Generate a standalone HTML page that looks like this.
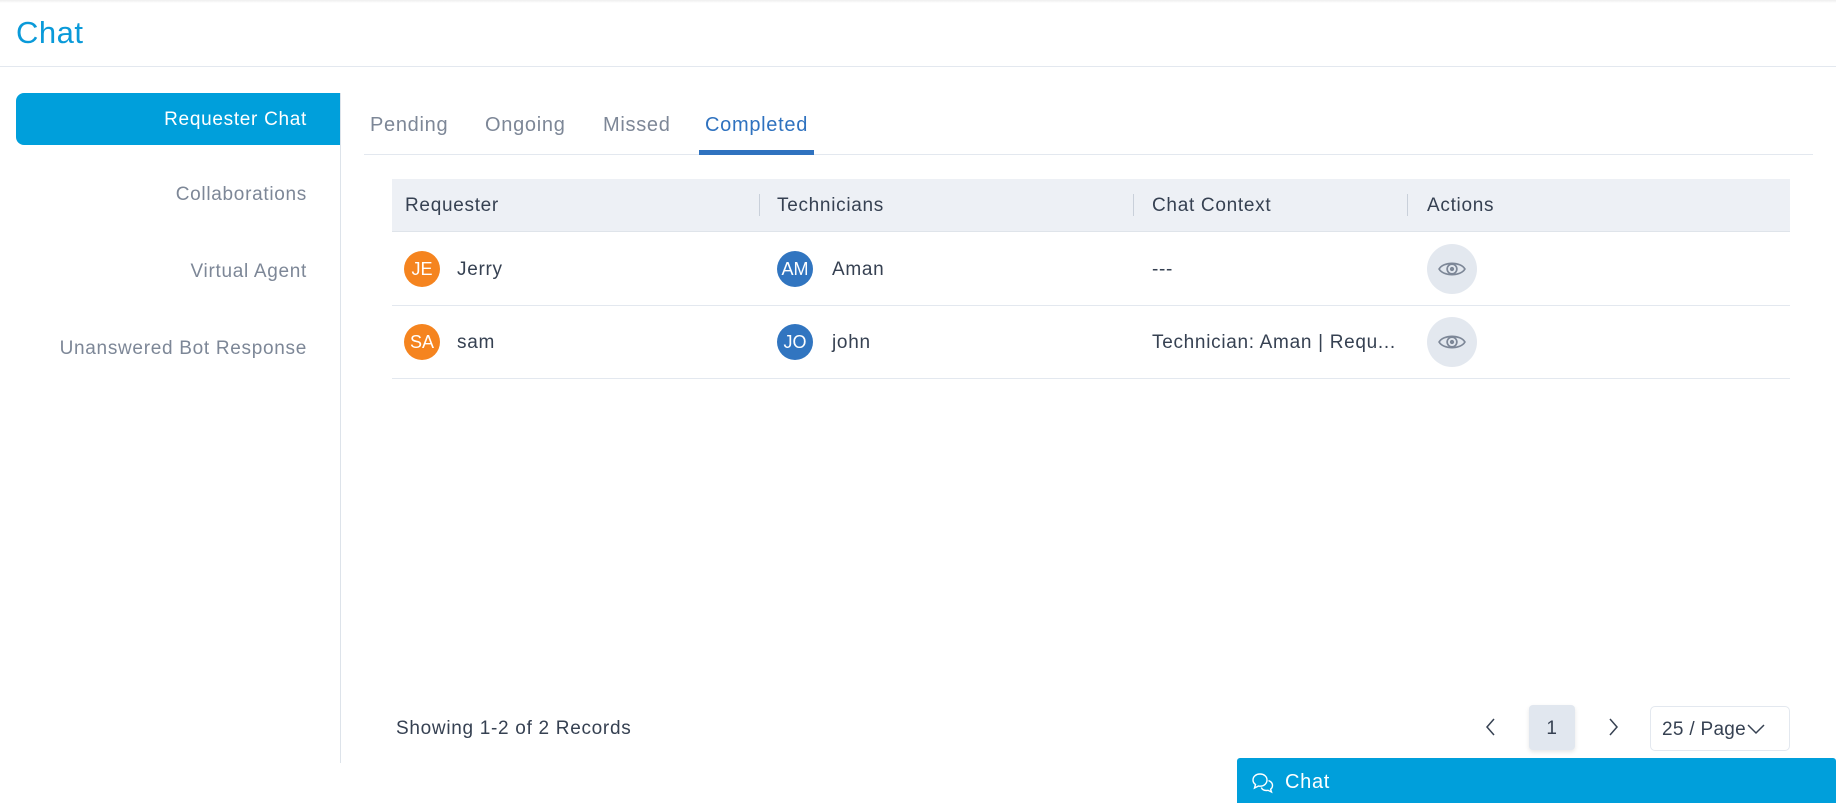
<!DOCTYPE html>
<html><head><meta charset="utf-8"><style>
*{box-sizing:border-box;margin:0;padding:0}
body{width:1836px;height:803px;overflow:hidden;background:#fff;font-family:"Liberation Sans",sans-serif;position:relative;color:#364152;letter-spacing:0.7px}
.abs{position:absolute}
.title{left:16px;top:15px;font-size:31px;color:#0a9ad9;letter-spacing:0.5px}
.hline{left:0;top:66px;width:1836px;height:1px;background:#e3e8ef}
.topsh{left:0;top:0;width:1836px;height:3px;background:linear-gradient(#eee,#fff)}
.active{left:16px;top:93px;width:324px;height:52px;background:#009fdb;border-radius:8px 0 0 8px;color:#fff;font-size:19px;text-align:right;padding-right:33px;line-height:54px}
.side{left:0;width:307px;text-align:right;font-size:19px;color:#7d8797}
.vline{left:340px;top:93px;width:1px;height:670px;background:#dde3ea}
.tab{top:114px;font-size:20px;color:#7d8797}
.tabline{left:364px;top:154px;width:1449px;height:1px;background:#e3e8ef}
.th{top:179px;left:392px;width:1398px;height:53px;background:#edf0f5;border-bottom:1px solid #dfe4ea}
.thc{top:195px;font-size:19px;color:#364152}
.sep{top:194px;width:1px;height:22px;background:#c9d0da}
.row{left:392px;width:1398px;height:1px;background:#e3e8ef}
.av{width:36px;height:36px;border-radius:50%;color:#fff;font-size:18px;text-align:center;line-height:37px;letter-spacing:0}
.or{background:#f5841f}.bl{background:#3175c0}
.cell{font-size:19px;color:#364152}
.eye{width:50px;height:50px;border-radius:50%;background:#e3e8ef;display:flex;align-items:center;justify-content:center}
</style></head><body>
<div class="abs topsh"></div>
<div class="abs title">Chat</div>
<div class="abs hline"></div>
<div class="abs active">Requester Chat</div>
<div class="abs side" style="top:184px">Collaborations</div>
<div class="abs side" style="top:261px">Virtual Agent</div>
<div class="abs side" style="top:338px">Unanswered Bot Response</div>
<div class="abs vline"></div>

<div class="abs tab" style="left:370px">Pending</div>
<div class="abs tab" style="left:485px">Ongoing</div>
<div class="abs tab" style="left:603px">Missed</div>
<div class="abs tab" style="left:705px;color:#2f72bf">Completed</div>
<div class="abs tabline"></div>
<div class="abs" style="left:699px;top:150px;width:115px;height:5px;background:#2f72bf"></div>

<div class="abs th"></div>
<div class="abs thc" style="left:405px">Requester</div>
<div class="abs sep" style="left:759px"></div>
<div class="abs thc" style="left:777px">Technicians</div>
<div class="abs sep" style="left:1133px"></div>
<div class="abs thc" style="left:1152px">Chat Context</div>
<div class="abs sep" style="left:1407px"></div>
<div class="abs thc" style="left:1427px">Actions</div>

<div class="abs av or" style="left:404px;top:251px">JE</div>
<div class="abs cell" style="left:457px;top:259px">Jerry</div>
<div class="abs av bl" style="left:777px;top:251px">AM</div>
<div class="abs cell" style="left:832px;top:259px">Aman</div>
<div class="abs cell" style="left:1152px;top:259px">---</div>
<div class="abs eye" style="left:1427px;top:244px"><svg width="28" height="20" viewBox="0 0 26 18"><path d="M1 9C5 2 21 2 25 9C21 16 5 16 1 9Z" fill="none" stroke="#7d8797" stroke-width="1.6"/><circle cx="13" cy="9" r="4.5" fill="none" stroke="#7d8797" stroke-width="1.6"/><circle cx="13" cy="9" r="2" fill="#7d8797"/></svg></div>
<div class="abs row" style="top:305px"></div>

<div class="abs av or" style="left:404px;top:324px">SA</div>
<div class="abs cell" style="left:457px;top:332px">sam</div>
<div class="abs av bl" style="left:777px;top:324px">JO</div>
<div class="abs cell" style="left:832px;top:332px">john</div>
<div class="abs cell" style="left:1152px;top:332px">Technician: Aman | Requ...</div>
<div class="abs eye" style="left:1427px;top:317px"><svg width="28" height="20" viewBox="0 0 26 18"><path d="M1 9C5 2 21 2 25 9C21 16 5 16 1 9Z" fill="none" stroke="#7d8797" stroke-width="1.6"/><circle cx="13" cy="9" r="4.5" fill="none" stroke="#7d8797" stroke-width="1.6"/><circle cx="13" cy="9" r="2" fill="#7d8797"/></svg></div>
<div class="abs row" style="top:378px"></div>

<div class="abs cell" style="left:396px;top:718px">Showing 1-2 of 2 Records</div>
<svg class="abs" style="left:1484px;top:717px" width="14" height="20"><path d="M10 2L3 10L10 18" fill="none" stroke="#364152" stroke-width="1.5"/></svg>
<div class="abs" style="left:1529px;top:705px;width:46px;height:45px;background:#e1e7ef;border-radius:4px;box-shadow:0 2px 4px rgba(0,0,0,.1);text-align:center;line-height:47px;font-size:19px">1</div>
<svg class="abs" style="left:1606px;top:717px" width="14" height="20"><path d="M4 2L11 10L4 18" fill="none" stroke="#364152" stroke-width="1.5"/></svg>
<div class="abs" style="left:1650px;top:706px;width:140px;height:45px;border:1px solid #e3e8ef;border-radius:5px;font-size:19px;line-height:45px;padding-left:11px;letter-spacing:0.3px;white-space:nowrap">25 / Page<svg width="18" height="12" style="margin-left:1px"><path d="M1 2L9 10L17 2" fill="none" stroke="#364152" stroke-width="1.5"/></svg></div>

<div class="abs" style="left:1237px;top:758px;width:599px;height:45px;background:#009fdb;border-radius:3px 3px 0 0;color:#fff;font-size:20px;line-height:48px;padding-left:48px">Chat</div>
<svg class="abs" style="left:1251px;top:772px" width="24" height="22" viewBox="0 0 24 22"><path d="M9 2C4.5 2 2 5 2 8C2 10 3 11.5 4.5 12.5L3.5 16L7.5 14C8 14.2 8.5 14.2 9 14.2C13.5 14.2 16 11 16 8C16 5 13.5 2 9 2Z" fill="none" stroke="#fff" stroke-width="1.4"/><path d="M17.5 8.5C20 9.5 21.5 11.5 21.5 13.5C21.5 15 20.8 16.3 19.6 17.2L20.5 20L17 18.3C16.5 18.4 16 18.5 15.5 18.5C13 18.5 11 17.2 10.3 15.5" fill="none" stroke="#fff" stroke-width="1.4"/></svg>
</body></html>
